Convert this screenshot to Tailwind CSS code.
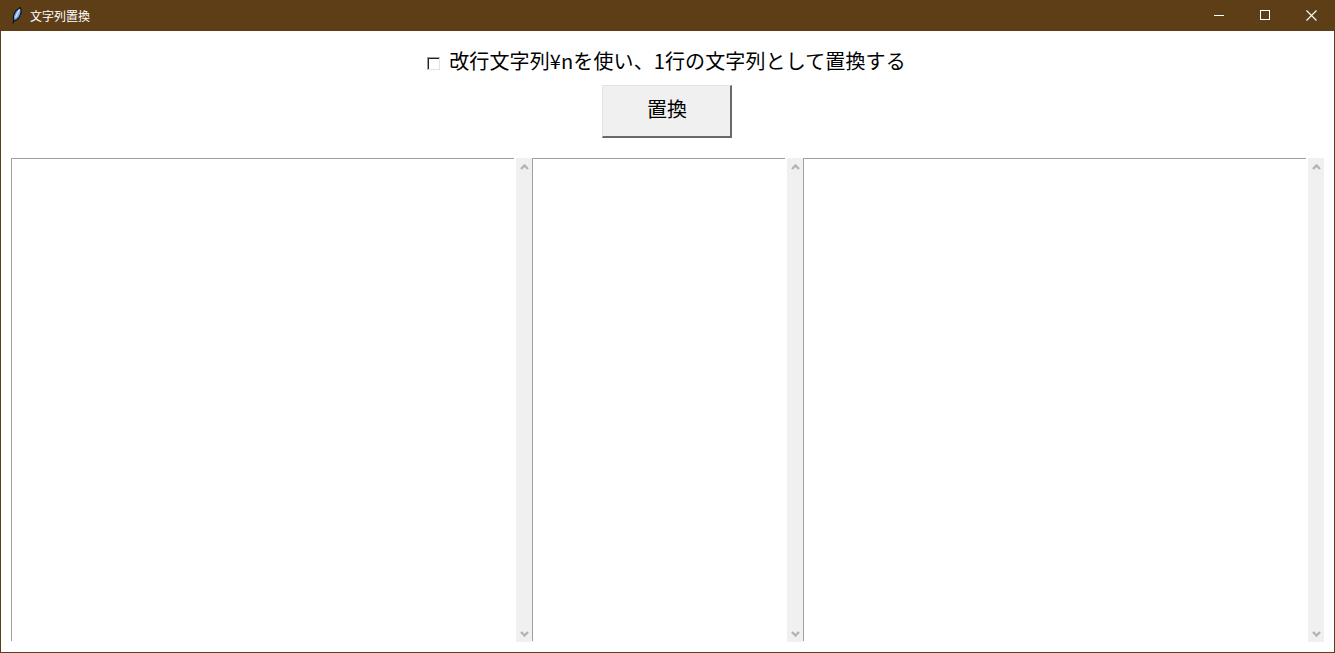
<!DOCTYPE html>
<html lang="ja">
<head>
  <meta charset="UTF-8" />
  <title>文字列置換</title>
  <script src="https://cdn.jsdelivr.net/npm/@tailwindcss/browser@4"></script>
</head>
<body class="w-[1335px] h-[653px] overflow-hidden bg-white font-['Noto_Sans_CJK_JP','Noto_Sans_CJK_SC',sans-serif]">
  <div class="flex flex-col w-full h-full border border-t-0 border-[#5e3e16]">

    <!-- title bar -->
    <div class="flex items-center h-[31px] -mx-px bg-[#5e3e16] text-white shrink-0">
      <svg class="ml-[12px] w-[10px] h-[17px]" viewBox="0 0 10 17">
        <path d="M8.5 0.5 C10 4.5 8.5 10 5 12.5 L2.2 14 C0 9.5 2.5 3.5 8.5 0.5Z" fill="#6fa8e8" stroke="#10131a" stroke-width="1.2"/>
        <path d="M7.5 2.5 L3.5 10.5" stroke="#d5e6ff" stroke-width="1.4"/>
        <path d="M2 13 L1 16.5" stroke="#10131a" stroke-width="1.2"/>
      </svg>
      <span class="ml-[8px] text-[12px] leading-none">文字列置換</span>
      <div class="ml-auto mr-px pb-px flex h-full">
        <div class="flex items-center justify-center w-[46px]">
          <svg class="w-[10px] h-[10px]" viewBox="0 0 10 10"><path d="M0 5.5H10" stroke="white" stroke-width="1"/></svg>
        </div>
        <div class="flex items-center justify-center w-[46px]">
          <svg class="w-[10px] h-[10px]" viewBox="0 0 10 10"><rect x="0.5" y="0.5" width="9" height="9" fill="none" stroke="white" stroke-width="1"/></svg>
        </div>
        <div class="flex items-center justify-center w-[46px]">
          <svg class="w-[11px] h-[11px]" viewBox="0 0 11 11"><path d="M0.5 0.5L10.5 10.5M10.5 0.5L0.5 10.5" stroke="white" stroke-width="1.1"/></svg>
        </div>
      </div>
    </div>

    <!-- option row -->
    <div class="flex items-center justify-center h-[54px] pt-[6px] pr-[2px] shrink-0">
      <span class="block w-[13px] h-[13px] mt-[5px] mr-[9px] bg-white border border-[#e3e3e3] border-t-[#a0a0a0] border-l-[#a0a0a0]">
        <span class="block w-full h-full border-t border-l border-[#202020]"></span>
      </span>
      <span class="text-[20px] leading-none tracking-[0.12px] text-black">改行文字列¥nを使い、1行の文字列として置換する</span>
    </div>

    <!-- replace button -->
    <div class="flex justify-center pr-[2px] shrink-0">
      <button class="w-[130px] h-[53px] pb-[4px] pl-[2px] bg-[#f0f0f0] border border-[#e3e3e3] border-r-2 border-b-2 border-r-[#696969] border-b-[#696969] text-[20px] leading-none text-black">置換</button>
    </div>

    <!-- text panes -->
    <div class="flex mt-[20px] ml-[10px] h-[484px]">
      <div class="w-[505px] mb-px pr-[2px] border-l border-[#a0a0a0] bg-white">
        <div class="border-t border-[#a0a0a0]"></div>
      </div>
      <div class="flex flex-col items-center justify-between w-[16px] pt-[6px] pb-[5px] bg-[#f0f0f0]">
        <svg class="w-[9px] h-[6px]" viewBox="0 0 9 6"><path d="M1 5L4.5 1.5L8 5" fill="none" stroke="#b4b4b4" stroke-width="2.4"/></svg>
        <svg class="w-[9px] h-[6px]" viewBox="0 0 9 6"><path d="M1 1L4.5 4.5L8 1" fill="none" stroke="#b4b4b4" stroke-width="2.4"/></svg>
      </div>
      <div class="w-[255px] mb-px pr-[2px] border-l border-[#a0a0a0] bg-white">
        <div class="border-t border-[#a0a0a0]"></div>
      </div>
      <div class="flex flex-col items-center justify-between w-[16px] pt-[6px] pb-[5px] bg-[#f0f0f0]">
        <svg class="w-[9px] h-[6px]" viewBox="0 0 9 6"><path d="M1 5L4.5 1.5L8 5" fill="none" stroke="#b4b4b4" stroke-width="2.4"/></svg>
        <svg class="w-[9px] h-[6px]" viewBox="0 0 9 6"><path d="M1 1L4.5 4.5L8 1" fill="none" stroke="#b4b4b4" stroke-width="2.4"/></svg>
      </div>
      <div class="w-[505px] mb-px pr-[2px] border-l border-[#a0a0a0] bg-white">
        <div class="border-t border-[#a0a0a0]"></div>
      </div>
      <div class="flex flex-col items-center justify-between w-[16px] pt-[6px] pb-[5px] bg-[#f0f0f0]">
        <svg class="w-[9px] h-[6px]" viewBox="0 0 9 6"><path d="M1 5L4.5 1.5L8 5" fill="none" stroke="#b4b4b4" stroke-width="2.4"/></svg>
        <svg class="w-[9px] h-[6px]" viewBox="0 0 9 6"><path d="M1 1L4.5 4.5L8 1" fill="none" stroke="#b4b4b4" stroke-width="2.4"/></svg>
      </div>
    </div>
  </div>
</body>
</html>
